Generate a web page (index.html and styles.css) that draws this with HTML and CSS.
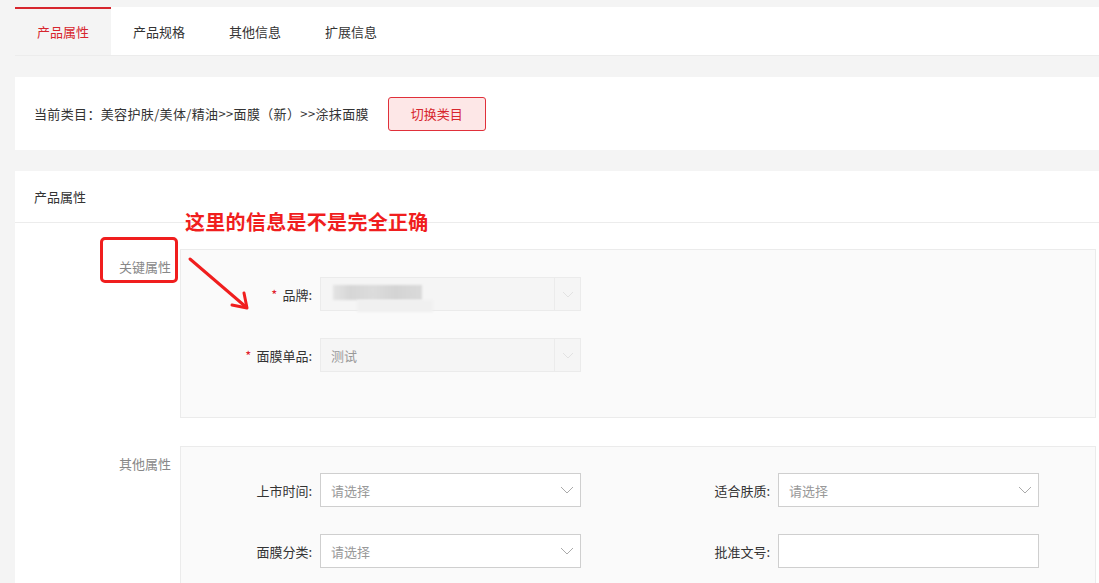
FILE: index.html
```html
<!DOCTYPE html>
<html lang="zh-CN">
<head>
    <meta charset="UTF-8">
    <title>产品属性</title>
    <link rel="stylesheet" href="styles.css">
</head>
<body>

    <div class="tabs">
        <div class="tab active">产品属性</div>
        <div class="tab">产品规格</div>
        <div class="tab">其他信息</div>
        <div class="tab">扩展信息</div>
    </div>

    <div class="card category">
        <span class="crumb">当前类目：美容护肤/美体/精油&gt;&gt;面膜（新）&gt;&gt;涂抹面膜</span>
        <button class="btn-switch">切换类目</button>
    </div>

    <div class="card attrs">
        <div class="card-head">产品属性</div>

        <!-- annotation drawn over the screenshot -->
        <div class="note">这里的信息是不是完全正确</div>
        <div class="note-box"></div>
        <svg class="note-arrow" width="70" height="60" viewBox="0 0 70 60">
            <path d="M4 4 L60 52" stroke="#f01e1e" stroke-width="3" stroke-linecap="round" fill="none"/>
            <path d="M46 50 L61 53 L58 38" stroke="#f01e1e" stroke-width="3" stroke-linecap="round" stroke-linejoin="round" fill="none"/>
        </svg>

        <div class="section">
            <div class="section-label">关键属性</div>
            <div class="section-box key">
                <div class="field">
                    <label><i>*</i>品牌:</label>
                    <div class="select disabled">
                        <span class="value blurred"><b></b><b class="under"></b></span>
                        <span class="arrow">
                            <svg width="12" height="7" viewBox="0 0 12 7"><path d="M1 1 L6 6 L11 1" stroke="#e2e2e2" fill="none"/></svg>
                        </span>
                    </div>
                </div>
                <div class="field">
                    <label><i>*</i>面膜单品:</label>
                    <div class="select disabled">
                        <span class="value">测试</span>
                        <span class="arrow">
                            <svg width="12" height="7" viewBox="0 0 12 7"><path d="M1 1 L6 6 L11 1" stroke="#e2e2e2" fill="none"/></svg>
                        </span>
                    </div>
                </div>
            </div>
        </div>

        <div class="section">
            <div class="section-label">其他属性</div>
            <div class="section-box grid">
                <div class="field">
                    <label>上市时间:</label>
                    <div class="select">
                        <span class="value placeholder">请选择</span>
                        <svg class="chevron" width="14" height="8" viewBox="0 0 14 8"><path d="M1 1 L7 7 L13 1" stroke="#aaa" fill="none"/></svg>
                    </div>
                </div>
                <div class="field">
                    <label>适合肤质:</label>
                    <div class="select">
                        <span class="value placeholder">请选择</span>
                        <svg class="chevron" width="14" height="8" viewBox="0 0 14 8"><path d="M1 1 L7 7 L13 1" stroke="#aaa" fill="none"/></svg>
                    </div>
                </div>
                <div class="field">
                    <label>面膜分类:</label>
                    <div class="select">
                        <span class="value placeholder">请选择</span>
                        <svg class="chevron" width="14" height="8" viewBox="0 0 14 8"><path d="M1 1 L7 7 L13 1" stroke="#aaa" fill="none"/></svg>
                    </div>
                </div>
                <div class="field">
                    <label>批准文号:</label>
                    <div class="select input"></div>
                </div>
            </div>
        </div>
    </div>

</body>
</html>
```

FILE: styles.css
```css
/* General */
* {
    margin: 0;
    padding: 0;
    box-sizing: border-box;
}
html, body {
    font-family: "Noto Sans CJK SC", "Liberation Sans", sans-serif;
    font-size: 13px;
    color: #333;
    background: #f4f4f4;
    overflow: hidden;
}
body {
    padding: 7px 0 0 15px;
    height: 583px;
}
/* Tabs */
.tabs {
    display: flex;
    height: 49px;
    background: #fff;
    border-bottom: 1px solid #ececec;
}
.tab {
    width: 96px;
    display: flex;
    align-items: center;
    justify-content: center;
    border-top: 2px solid transparent;
    padding-bottom: 2px;
}
.tab.active {
    background: #f4f4f4;
    border-top-color: #d7262e;
    color: #d7262e;
}
/* Cards */
.card {
    background: #fff;
    margin-top: 21px;
}
.category {
    height: 73px;
    display: flex;
    align-items: center;
    padding-left: 19px;
}
.crumb {
    letter-spacing: 0.35px;
}
.btn-switch {
    margin-left: 19px;
    width: 98px;
    height: 34px;
    background: #fde7e7;
    border: 1px solid #e0303a;
    border-radius: 3px;
    color: #d7262e;
    font-family: inherit;
    font-size: 13px;
}
.attrs {
    position: relative;
    height: 420px;
}
.card-head {
    height: 52px;
    line-height: 52px;
    padding-left: 19px;
    border-bottom: 1px solid #ececec;
}
/* Sections */
.section {
    display: flex;
    margin-top: 26px;
    padding-right: 3px;
}
.section + .section {
    margin-top: 28px;
}
.section-label {
    flex: 0 0 165px;
    padding: 8px 9px 0 0;
    text-align: right;
    color: #888;
}
.section-box {
    flex: 1;
    min-width: 0;
    background: #fafafa;
    border: 1px solid #ebebeb;
    padding: 27px 0 0;
}
.section-box.key {
    height: 169px;
}
.section-box.grid {
    display: grid;
    grid-template-columns: 458px 1fr;
    align-content: start;
    row-gap: 27px;
    height: 150px;
    padding-top: 26px;
}
.key .field + .field {
    margin-top: 27px;
}
.field {
    display: flex;
    align-items: center;
}
.field label {
    width: 131px;
    text-align: right;
    margin-right: 8px;
}
.field label i {
    font-style: normal;
    color: #e0202a;
    margin-right: 5px;
}
/* Selects */
.select {
    width: 261px;
    height: 34px;
    background: #fff;
    border: 1px solid #cfcfcf;
    display: flex;
    align-items: center;
    padding-left: 10px;
    position: relative;
}
.select .placeholder {
    color: #999;
}
.select .chevron {
    position: absolute;
    right: 6px;
    top: 12px;
}
.select.disabled {
    background: #f5f5f5;
    border-color: #ebebeb;
    color: #999;
}
.select.disabled .value {
    flex: 1;
}
.select .arrow {
    width: 26px;
    height: 100%;
    border-left: 1px solid #ebebeb;
    display: flex;
    align-items: center;
    justify-content: center;
}
.blurred {
    position: relative;
    height: 100%;
}
.blurred b {
    position: absolute;
    left: 2px;
    top: 7px;
    width: 89px;
    height: 15px;
    background: linear-gradient(90deg, #e4e4e4 0, #d6d6d6 20%, #dcdcdc 45%, #d4d4d4 70%, #dadada 100%);
    filter: blur(1px);
}
.blurred b.under {
    left: 26px;
    top: 22px;
    width: 76px;
    height: 12px;
    background: #f0f0f0;
}
/* Annotation overlay */
.note {
    position: absolute;
    left: 170px;
    top: 36px;
    font-size: 20px;
    font-weight: bold;
    color: #f01e1e;
    letter-spacing: 0.3px;
}
.note-box {
    position: absolute;
    left: 85px;
    top: 66px;
    width: 78px;
    height: 46px;
    border: 3px solid #f01e1e;
    border-radius: 5px;
}
.note-arrow {
    position: absolute;
    left: 171px;
    top: 84px;
}
```
